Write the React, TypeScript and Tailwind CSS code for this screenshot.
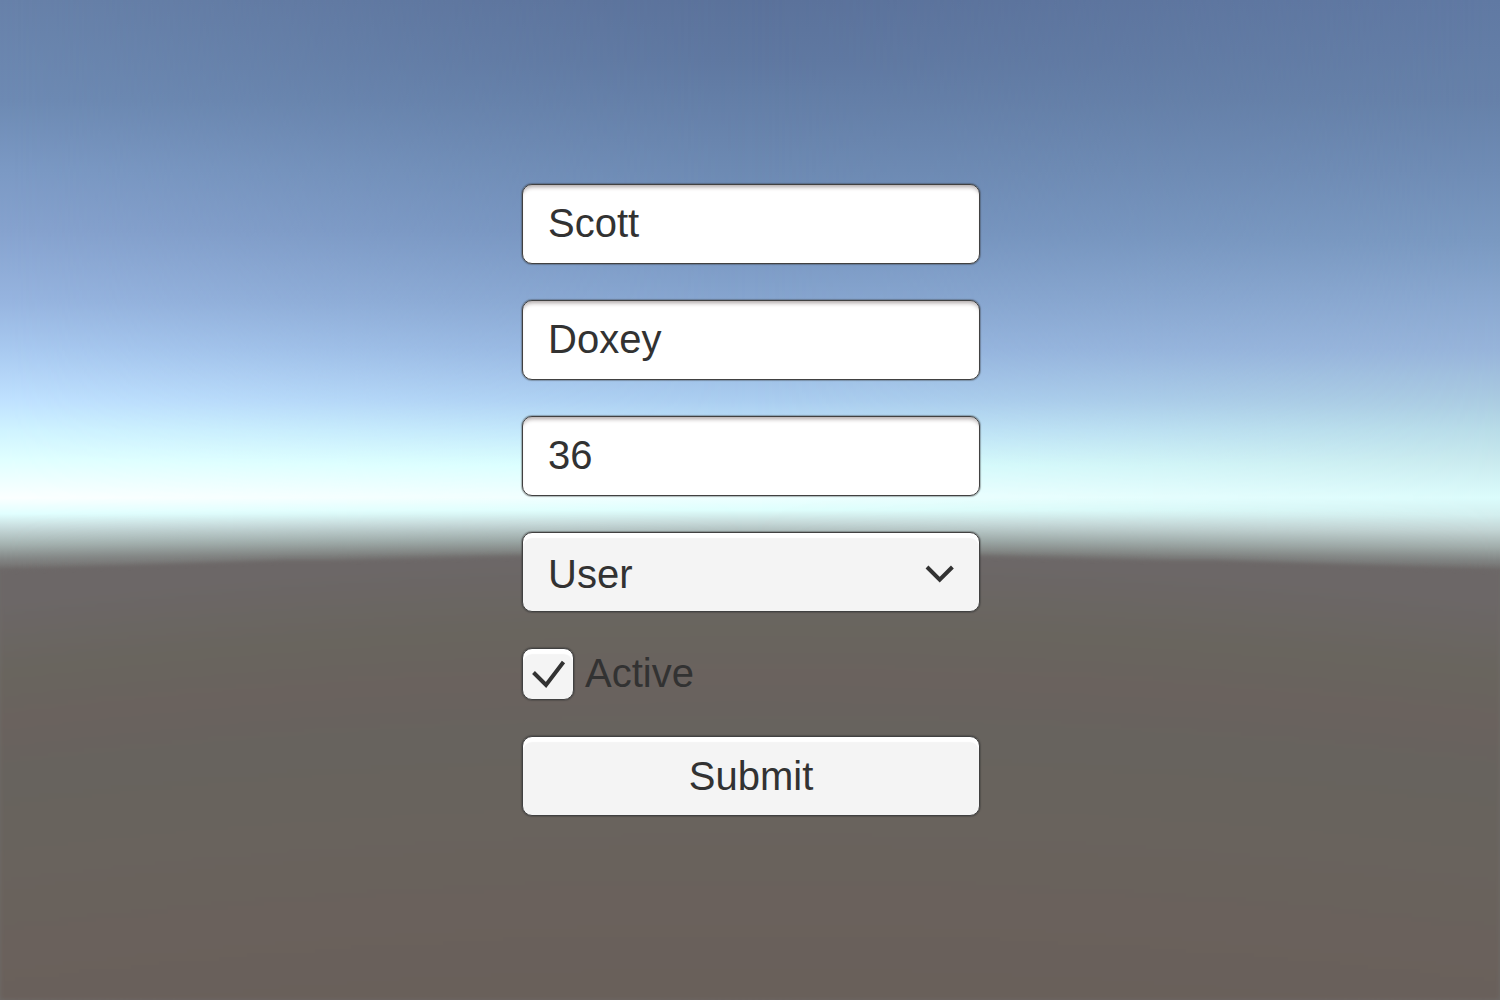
import React from 'react';

const field =
  'block h-20 w-full rounded-[10px] border border-[#414141] px-[25px] text-[40px] leading-[44px] text-[#323232] outline-none focus-visible:ring-2 focus-visible:ring-sky-300';
const textBox =
  'bg-white pb-[2px] shadow-[inset_0_5px_4px_-3px_rgba(50,30,30,0.4),0_0_1px_1px_rgba(50,50,50,0.35)]';
const raised =
  'bg-[#f4f4f4] shadow-[inset_0_5px_1px_#ffffff,0_0_1px_1px_rgba(50,50,50,0.35)]';

function Sky() {
  return (
    <div aria-hidden="true" className="absolute inset-0 -z-10">
      <div className="absolute inset-0 bg-[linear-gradient(to_bottom,#5b729b_0%,#5f78a1_6%,#6580a9_11%,#6d8ab3_17%,#7593be_23%,#86a5cf_30%,#95b5df_35%,#aacdf0_40%,#bfe4fa_43%,#d9ffff_46.5%,#efffff_49.7%,#dffffd_51%,#c5d8d8_52.3%,#98a4a2_54%,#706d6b_55.6%,#6d6867_57%)]" />
      <div className="absolute inset-0 bg-[linear-gradient(to_bottom,#6781a9_0%,#6d8ab3_10%,#7b99c4_17%,#86a2ce_23%,#96b4df_30%,#a8c9f0_35%,#bfe1ff_40%,#cff3ff_43%,#e0ffff_46%,#fbffff_49.8%,#e0ffff_51.4%,#c8dcdd_52.7%,#a5b3b1_54.4%,#858988_55.8%,#6f6b6a_57%)] [mask-image:linear-gradient(to_right,black_0%,rgba(0,0,0,0.7)_14%,rgba(0,0,0,0.35)_30%,transparent_50%)]" />
      <div className="absolute inset-0 bg-[linear-gradient(to_bottom,#6079a3_0%,#6681a9_10%,#6f8cb5_17%,#7a99c1_24%,#8aa8d0_30%,#97b4da_35%,#aacbe1_40%,#b8dce8_43%,#c8e9ee_46%,#dbfcfc_49.8%,#d3efef_51.5%,#c3d5d5_53%,#a1adab_54.7%,#828685_56%,#6f6b6a_57%)] [mask-image:linear-gradient(to_left,black_0%,rgba(0,0,0,0.7)_14%,rgba(0,0,0,0.35)_30%,transparent_50%)]" />
      <div className="absolute inset-0 blur-[2px]">
        <div className="size-full bg-[radial-gradient(circle_at_50%_700vh,#69605a_600vh,#6a615c_609vh,#69635d_618vh,#67635e_627vh,#6a625e_632vh,#69655e_637vh,#6c6767_644vh)] [clip-path:polygon(0_57%,19%_56%,22%_56%,35%_55.6%,65%_55.6%,78%_56%,81%_56%,100%_57%,100%_100%,0_100%)]" />
      </div>
    </div>
  );
}

export default function App() {
  return (
    <main className="relative isolate flex min-h-screen items-center justify-center overflow-hidden pl-[2px] font-['Liberation_Sans',Arial,sans-serif] text-[#323232]">
      <Sky />
      <form className="flex w-full max-w-[458px] flex-col gap-9" onSubmit={(e) => e.preventDefault()}>
        <input className={`${field} ${textBox}`} type="text" aria-label="First name" defaultValue="Scott" />
        <input className={`${field} ${textBox}`} type="text" aria-label="Last name" defaultValue="Doxey" />
        <input className={`${field} ${textBox}`} type="text" inputMode="numeric" aria-label="Age" defaultValue="36" />
        <div className="relative">
          <select className={`${field} ${raised} appearance-none pt-1`} aria-label="Role" defaultValue="User">
            <option>User</option>
            <option>Admin</option>
          </select>
          <svg
            aria-hidden="true"
            viewBox="0 0 32 20"
            className="pointer-events-none absolute right-6 top-8 h-5 w-8 fill-none stroke-[#323232] stroke-4"
          >
            <path d="M3 3 15.700 15.700 28.400 3" />
          </svg>
        </div>
        <label className="flex h-[52px] items-center gap-[11px] text-[40px] leading-[44px]">
          <span className="relative block size-[52px] shrink-0">
            <input
              type="checkbox"
              defaultChecked
              className={`peer block size-full appearance-none rounded-[10px] border border-[#414141] ${raised}`}
            />
            <svg
              aria-hidden="true"
              viewBox="0 0 52 52"
              className="pointer-events-none invisible absolute inset-0 size-full fill-none stroke-[#323232] stroke-4 peer-checked:visible"
            >
              <path d="M11.500 24.500 24 37 41.500 14" />
            </svg>
          </span>
          <span className="pb-[2px]">Active</span>
        </label>
        <button type="submit" className={`${field} ${raised} text-center`}>
          Submit
        </button>
      </form>
    </main>
  );
}
